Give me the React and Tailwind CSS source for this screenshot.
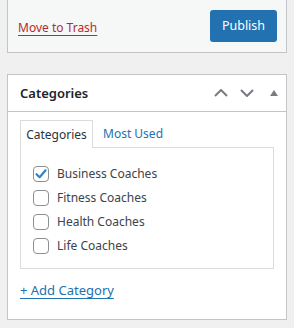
import React from "react";

const font = { fontFamily: '"Noto Sans", "Open Sans", sans-serif' };

function Checkbox({ checked }) {
  return (
    <span className="w-[16px] h-[16px] shrink-0 border border-[#8c8f94] rounded-[4px] bg-white flex items-center justify-center">
      {checked && (
        <svg width="14" height="14" viewBox="0 0 14 14">
          <path d="M2.5 7.2 L5.6 10.3 L11.6 3.3" fill="none" stroke="#3582c4" strokeWidth="2.2" strokeLinecap="round" strokeLinejoin="round" />
        </svg>
      )}
    </span>
  );
}

export default function App() {
  const items = [
    ["Business Coaches", true],
    ["Fitness Coaches", false],
    ["Health Coaches", false],
    ["Life Coaches", false],
  ];
  return (
    <div className="w-[294px] h-[328px] overflow-hidden bg-[#f0f0f1] px-[7px] text-[12px] text-[#3c434a]" style={font}>
      <div className="h-[53px] bg-[#f6f7f7] border border-t-0 border-[#c3c4c7] flex items-center justify-between pl-[10px] pr-[9px]">
        <a className="text-[#b32d2e] underline underline-offset-[3px] leading-[18px] mt-[3px]">Move to Trash</a>
        <button className="w-[67px] h-[32px] rounded-[3px] bg-[#2271b1] text-white text-[12.5px] leading-[30px]">Publish</button>
      </div>

      <div className="mt-[21px] bg-white border border-[#c3c4c7]">
        <div className="h-[37px] border-b border-[#c3c4c7] flex items-center justify-between pl-[12px] pr-[8px]">
          <h2 className="text-[13px] font-semibold text-[#1d2327] leading-[20px]">Categories</h2>
          <div className="flex items-center">
            <svg width="14" height="8" viewBox="0 0 14 8" className="mr-[12px]">
              <path d="M1 7 L7 1 L13 7" fill="none" stroke="#787c82" strokeWidth="2" />
            </svg>
            <svg width="14" height="8" viewBox="0 0 14 8" className="mr-[16px]">
              <path d="M1 1 L7 7 L13 1" fill="none" stroke="#787c82" strokeWidth="2" />
            </svg>
            <svg width="8" height="6" viewBox="0 0 8 6">
              <path d="M0 6 L4 0 L8 6 Z" fill="#787c82" />
            </svg>
          </div>
        </div>

        <div className="px-[12px] pt-[8px]">
          <div className="flex items-end -mb-px relative">
            <div className="w-[73px] h-[28px] border border-b-0 border-[#dcdcde] bg-white text-[#2c3338] flex items-center justify-center leading-[18px]">Categories</div>
            <div className="h-[28px] pl-[10px] text-[#2271b1] flex items-center leading-[18px]">Most Used</div>
          </div>
          <div className="border border-[#dcdcde] pt-[14px] pb-[10px] px-[12px]">
            {items.map(([label, checked]) => (
              <div key={label} className="h-[24px] flex items-center gap-[8px] text-[#3c434a]">
                <Checkbox checked={checked} />
                <span className="leading-[18px]">{label}</span>
              </div>
            ))}
          </div>
          <div className="pt-[12px] pb-[19px] leading-[18px]">
            <a className="text-[#2271b1] text-[13px] underline underline-offset-[3px] leading-[18px]">+ Add Category</a>
          </div>
        </div>
      </div>
    </div>
  );
}
